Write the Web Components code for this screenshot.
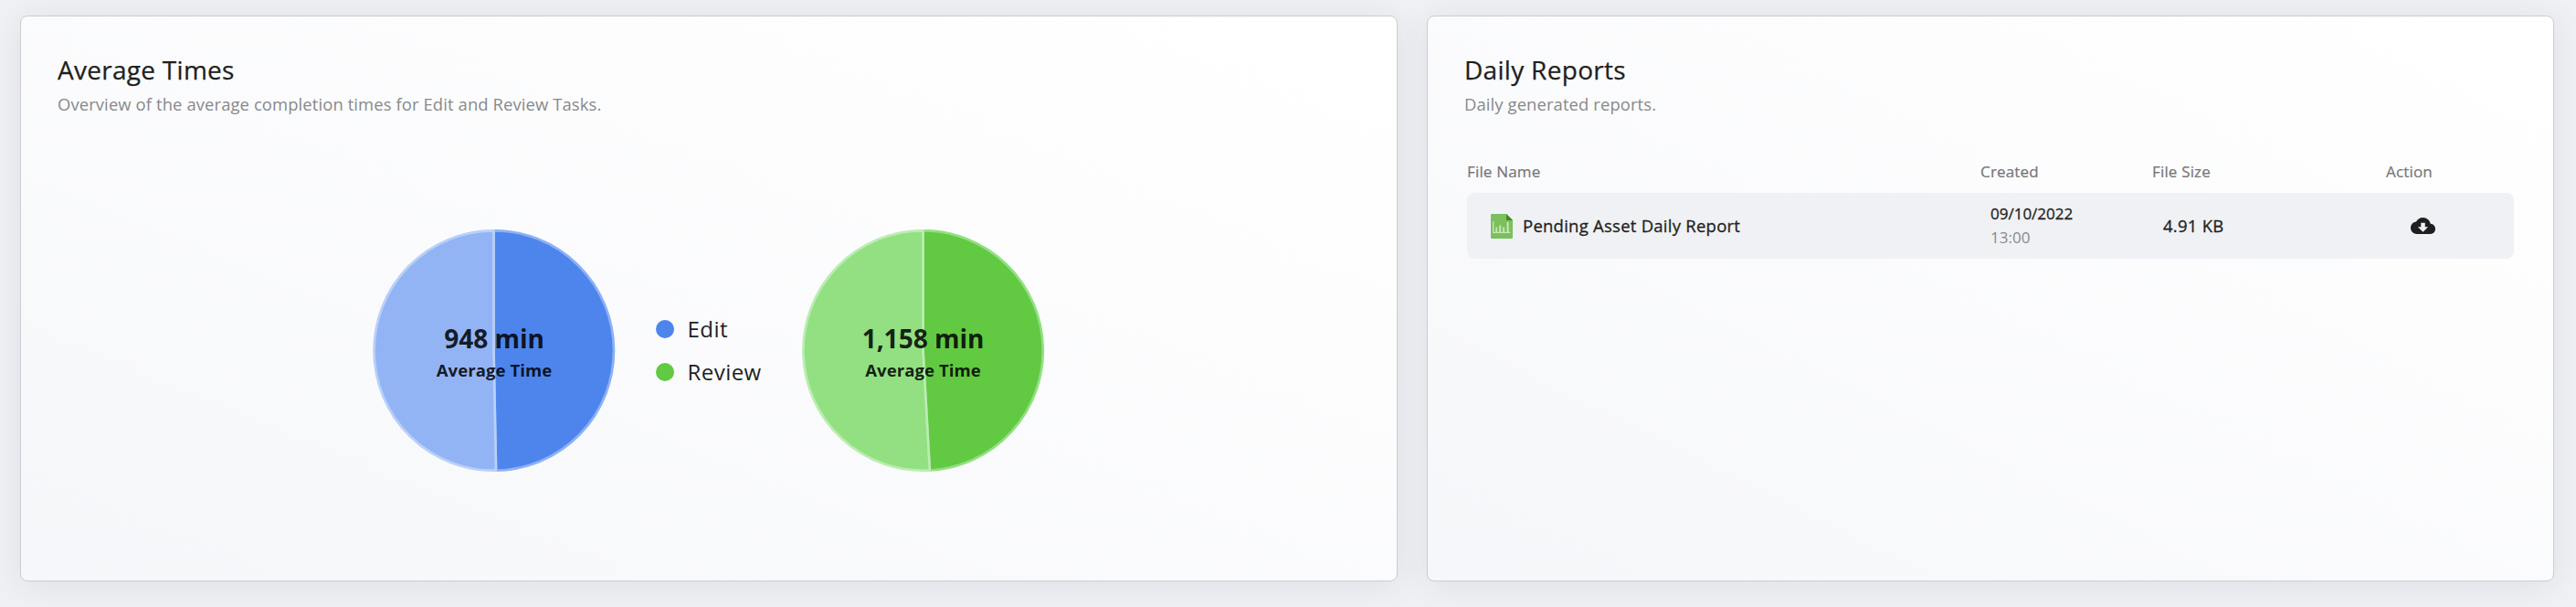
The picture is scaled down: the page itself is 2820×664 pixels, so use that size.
<!DOCTYPE html>
<html lang="en">
<head>
<meta charset="utf-8">
<title>Dashboard</title>
<style>
body{margin:0;height:664px;overflow:hidden;background:#f0f1f5;font-family:"Open Sans","Noto Sans",sans-serif;color:#1f1f20}
</style>
</head>
<body>
<dash-board>
  <dash-card class="times" heading="Average Times" note="Overview of the average completion times for Edit and Review Tasks.">
    <time-charts></time-charts>
  </dash-card>
  <dash-card class="reports" heading="Daily Reports" note="Daily generated reports.">
    <report-table></report-table>
  </dash-card>
</dash-board>
<script>
const define = (name, render) => customElements.define(name, class extends HTMLElement {
  connectedCallback() {
    if (this.shadowRoot) return;
    this.attachShadow({mode: 'open'}).innerHTML = render(this);
  }
});

define('dash-board', () => `
<style>
:host{display:grid;grid-template-columns:1508px 1234px;column-gap:32px;padding:17px 24px 28px 22px;height:619px}
::slotted(.times){--title-track:.28px}
::slotted(.reports){--title-track:.3px}
</style><slot></slot>`);

define('dash-card', el => `
<style>
:host{display:block;box-sizing:border-box;height:619px;padding:39px 40px 0;border:1px solid #cccdd1;border-radius:8px;
background:linear-gradient(to top right,#f6f7fa,#fff 94%) padding-box;box-shadow:0 4px 36px rgba(40,42,60,.09)}
h2{margin:0;font-size:28px;font-weight:400;line-height:38px;letter-spacing:var(--title-track);-webkit-text-stroke:.25px}
p{margin:5px 0 0;font-size:18.4px;line-height:28px;letter-spacing:.12px;color:#88898b}
</style>
<h2>${el.getAttribute('heading')}</h2><p>${el.getAttribute('note')}</p><slot></slot>`);

define('time-charts', () => `
<style>
:host{display:flex;justify-content:center;align-items:flex-start;margin-top:123px;padding-right:2px}
.legend{width:118px;margin:0 42px 0 45px;padding-top:93px}
.item{display:flex;align-items:center;gap:15px;height:32px;margin-bottom:15px;font-size:24px;line-height:32px;letter-spacing:.45px}
.item i{flex:none;width:20px;height:20px;border-radius:50%;background:var(--c)}
</style>
<pie-chart value="948 min" tilt="1.1" dark="#4d85ed" light="#93b4f4" rim="#8db1f3" edge="#b9d0f8" style="--nudge:2px"></pie-chart>
<div class="legend">
  <div class="item" style="--c:#4d85ed"><i></i><span>Edit</span></div>
  <div class="item" style="--c:#62c942"><i></i><span>Review</span></div>
</div>
<pie-chart value="1,158 min" tilt="3.2" dark="#62c942" light="#92e082" rim="#92e082" edge="#bcecb2"></pie-chart>`);

define('pie-chart', el => {
  const a = k => el.getAttribute(k);
  const r = 131.2, t = a('tilt') * Math.PI / 180;
  const x = (132.5 + r * Math.sin(t)).toFixed(2), y = (132.5 + r * Math.cos(t)).toFixed(2);
  return `
<style>
:host{display:grid;width:265px;height:265px}
svg,.label{grid-area:1/1}
svg{display:block;overflow:visible}
.label{position:relative;padding:100px 0 0 var(--nudge,1px);text-align:center;font-weight:700;color:rgba(0,0,0,.87)}
.value{font-size:28px;line-height:38px}
.name{margin-top:3px;font-size:18.5px;line-height:25px;letter-spacing:.1px}
</style>
<svg width="265" height="265" viewBox="0 0 265 265" stroke-width="2.7" stroke-linejoin="round">
  <path d="M132.5 132.5V1.3A${r} ${r} 0 0 1 ${x} ${y}Z" fill="${a('dark')}" stroke="${a('rim')}"/>
  <path d="M132.5 132.5L${x} ${y}A${r} ${r} 0 1 1 132.5 1.3Z" fill="${a('light')}" stroke="${a('edge')}"/>
</svg>
<div class="label"><div class="value">${a('value')}</div><div class="name">Average Time</div></div>`;
});

define('report-table', () => `
<style>
:host{display:block;width:1146px;margin:48px 0 0 3px}
.head,.row{display:grid;grid-template-columns:562px 188px 256px 140px}
.head{font-size:17px;line-height:24px;letter-spacing:.17px;color:#757678;-webkit-text-stroke:.2px}
.row{height:72px;margin-top:11px;align-items:center;border-radius:8px;background:#f0f1f5;font-size:18.5px;line-height:26px;letter-spacing:.25px;-webkit-text-stroke:.3px}
.file{display:flex;align-items:center;gap:11px;padding-left:26px}
.date{padding:0 0 1px 11px;font-size:17px;letter-spacing:0}
.date div+div{color:#88898b;-webkit-text-stroke:0}
.size{padding-left:12px}
.action{display:flex;padding-left:27px}
</style>
<div class="head"><span>File Name</span><span>Created</span><span>File Size</span><span>Action</span></div>
<div class="row">
  <div class="file"><report-icon></report-icon><span>Pending Asset Daily Report</span></div>
  <div class="date"><div>09/10/2022</div><div>13:00</div></div>
  <div class="size">4.91 KB</div>
  <div class="action"><download-icon></download-icon></div>
</div>`);

define('report-icon', () => `
<style>:host{display:block;width:24px;height:27px}svg{display:block}</style>
<svg width="24" height="27" viewBox="0 0 24 27">
  <path d="M1 0H17L24 7V26a1 1 0 0 1-1 1H1a1 1 0 0 1-1-1V1a1 1 0 0 1 1-1Z" fill="#7bc05c"/>
  <path d="M17 0L24 7H17Z" fill="#40881f"/>
  <path d="M2 8H3.3V19.7H21.5V21H2ZM5.3 14.5H7.1V19.7H5.3ZM9.2 12.5H11.2V19.7H9.2ZM13.2 14.5H15V19.7H13.2ZM17.6 9H19.7V19.7H17.6Z" fill="#c6e6b8"/>
</svg>`);

define('download-icon', () => `
<style>:host{display:block;width:27px;height:18px}svg{display:block}</style>
<svg width="27" height="18" viewBox="0 4 24 16" fill="#1f1f20">
  <path d="M19.35 10.04C18.67 6.59 15.64 4 12 4 9.11 4 6.6 5.64 5.35 8.04 2.34 8.36 0 10.91 0 14c0 3.31 2.69 6 6 6h13c2.76 0 5-2.24 5-5 0-2.64-2.05-4.78-4.65-4.96zM17 13l-5 5-5-5h3V9h4v4h3z"/>
</svg>`);
</script>
</body>
</html>
